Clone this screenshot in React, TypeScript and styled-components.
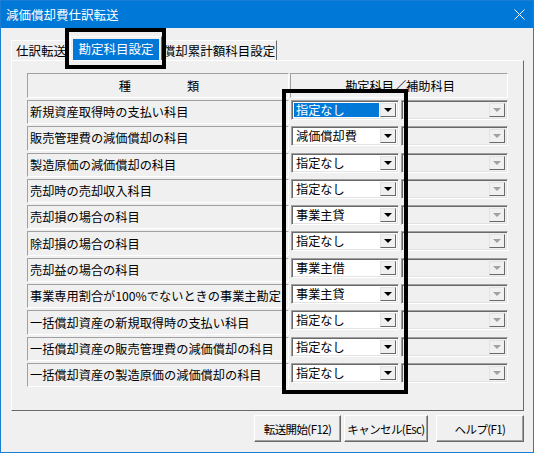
import {Fragment} from 'react';
import styled, {createGlobalStyle} from 'styled-components';

const GlobalStyle = createGlobalStyle`
    html, body {
        margin: 0;
        padding: 0;
        background: #ffffff;
    }
    body {
        font-family: "Noto Sans CJK JP", "Liberation Sans", sans-serif;
        font-size: 12px;
        color: #000000;
    }
`;

const rows = [
    {label: '新規資産取得時の支払い科目', value: '指定なし', active: true},
    {label: '販売管理費の減価償却の科目', value: '減価償却費'},
    {label: '製造原価の減価償却の科目', value: '指定なし'},
    {label: '売却時の売却収入科目', value: '指定なし'},
    {label: '売却損の場合の科目', value: '事業主貸'},
    {label: '除却損の場合の科目', value: '指定なし'},
    {label: '売却益の場合の科目', value: '事業主借'},
    {label: '事業専用割合が100%でないときの事業主勘定', value: '事業主貸'},
    {label: '一括償却資産の新規取得時の支払い科目', value: '指定なし'},
    {label: '一括償却資産の販売管理費の減価償却の科目', value: '指定なし'},
    {label: '一括償却資産の製造原価の減価償却の科目', value: '指定なし'},
];

const Window = styled.div`
    position: relative;
    width: 534px;
    height: 453px;
    box-sizing: border-box;
    border: 1px solid #1a7fd4;
    background: #f0f0f0;
    display: flex;
    flex-direction: column;
    overflow: hidden;
`;

const TitleBar = styled.div`
    height: 27px;
    background: #0078d7;
    color: #ffffff;
    display: flex;
    align-items: center;
    justify-content: space-between;
    padding: 0 8px 0 5px;
    font-size: 12.5px;
`;

const Body = styled.div`
    flex: 1;
    display: flex;
    flex-direction: column;
    padding: 8px 9px 0 10px;
`;

const TabRow = styled.div`
    height: 24px;
    display: flex;
    align-items: flex-end;
`;

const Tab = styled.div<{$selected?: boolean; $width: number}>`
    width: ${(p) => p.$width}px;
    height: ${(p) => (p.$selected ? 24 : 20)}px;
    box-sizing: border-box;
    display: flex;
    align-items: center;
    justify-content: center;
    padding: ${(p) => (p.$selected ? '1px 2px 0' : '0')};
    margin: ${(p) => (p.$selected ? '0 -1px' : '0')};
    border: 1px solid;
    border-bottom: none;
    border-color: #ffffff #696969 transparent #ffffff;
    position: relative;
    z-index: ${(p) => (p.$selected ? 1 : 0)};
    background: #f0f0f0;
    white-space: nowrap;
    font-size: 12.5px;
`;

const TabFocus = styled.span`
    flex: 1;
    text-align: center;
    background: #0078d7;
    color: #ffffff;
    padding: 1px 0 2px;
    line-height: 18px;
`;

const Panel = styled.div`
    height: 351px;
    box-sizing: border-box;
    border: 1px solid;
    border-color: #ffffff #696969 #696969 #ffffff;
    padding: 12px 0 0 15px;
`;

const Grid = styled.div`
    display: grid;
    grid-template-columns: 262px 218px;
    grid-auto-rows: 24.3px;
    grid-template-rows: 25px;
    column-gap: 1px;
    row-gap: 2px;
`;

const Cell = styled.div<{$center?: boolean}>`
    box-sizing: border-box;
    border: 1px solid;
    border-color: #a0a0a0 #ffffff #ffffff #a0a0a0;
    display: flex;
    align-items: center;
    justify-content: ${(p) => (p.$center ? 'center' : 'flex-start')};
    gap: 56px;
    padding-left: 2px;
    white-space: nowrap;
    font-size: 12.2px;
`;

const ComboPair = styled.div`
    display: flex;
    gap: 2px;
    height: 20px;
    padding-left: 1px;
`;

const Combo = styled.div<{$disabled?: boolean}>`
    width: ${(p) => (p.$disabled ? 107 : 108)}px;
    height: 20px;
    box-sizing: border-box;
    border: 1px solid;
    border-color: #a0a0a0 #ffffff #ffffff #a0a0a0;
    box-shadow: inset 1px 1px 0 #696969, inset -1px -1px 0 #e3e3e3;
    background: ${(p) => (p.$disabled ? '#f0f0f0' : '#ffffff')};
    display: flex;
    align-items: stretch;
    padding: 2px;
`;

const ComboText = styled.div<{$active?: boolean}>`
    flex: 1;
    display: flex;
    align-items: center;
    padding-left: 2px;
    margin-right: 1px;
    background: ${(p) => (p.$active ? '#0078d7' : 'transparent')};
    color: ${(p) => (p.$active ? '#ffffff' : '#000000')};
    font-size: 12.2px;
    line-height: 14px;
    white-space: nowrap;
`;

const ComboButton = styled.div<{$disabled?: boolean}>`
    width: 16px;
    box-sizing: border-box;
    background: #f0f0f0;
    border: 1px solid;
    border-color: #e3e3e3 #696969 #696969 #e3e3e3;
    display: flex;
    align-items: center;
    justify-content: center;
    &::after {
        content: '';
        border-left: 4px solid transparent;
        border-right: 4px solid transparent;
        border-top: 4px solid ${(p) => (p.$disabled ? '#a0a0a0' : '#000000')};
    }
`;

const ButtonRow = styled.div`
    display: flex;
    justify-content: flex-end;
    margin-top: 4px;
`;

const Button = styled.button<{$width: number; $gap: number}>`
    width: ${(p) => p.$width}px;
    height: 27px;
    margin-left: ${(p) => p.$gap}px;
    box-sizing: border-box;
    background: #f0f0f0;
    border: 1px solid;
    border-color: #ffffff #696969 #696969 #ffffff;
    box-shadow: inset -1px -1px 0 #a0a0a0;
    font-family: "Noto Sans CJK JP", "Liberation Sans", sans-serif;
    font-size: 11.5px;
    color: #000000;
    padding: 0;
    white-space: nowrap;
    letter-spacing: -0.6px;
`;

const Marker = styled.div<{$x: number; $y: number; $w: number; $h: number}>`
    position: absolute;
    left: ${(p) => p.$x}px;
    top: ${(p) => p.$y}px;
    width: ${(p) => p.$w}px;
    height: ${(p) => p.$h}px;
    box-sizing: border-box;
    border: 4px solid #000000;
    pointer-events: none;
`;

const CloseIcon = () => (
    <svg width="11" height="11" viewBox="0 0 11 11">
        <path d="M0.5 0.5 L10.5 10.5 M10.5 0.5 L0.5 10.5" stroke="#ffffff" strokeWidth="1" />
    </svg>
);

const App = () => {
    return (
        <>
            <GlobalStyle />
            <Window>
                <TitleBar>
                    <span>減価償却費仕訳転送</span>
                    <CloseIcon />
                </TitleBar>
                <Body>
                    <TabRow>
                        <Tab $width={60}>仕訳転送</Tab>
                        <Tab $selected $width={92}>
                            <TabFocus>勘定科目設定</TabFocus>
                        </Tab>
                        <Tab $width={116}>償却累計額科目設定</Tab>
                    </TabRow>
                    <Panel>
                        <Grid>
                            <Cell $center>
                                <span>種</span>
                                <span>類</span>
                            </Cell>
                            <Cell $center>勘定科目／補助科目</Cell>
                            {rows.map((row) => (
                                <Fragment key={row.label}>
                                    <Cell>{row.label}</Cell>
                                    <ComboPair>
                                        <Combo>
                                            <ComboText $active={row.active}>
                                                {row.value}
                                            </ComboText>
                                            <ComboButton />
                                        </Combo>
                                        <Combo $disabled>
                                            <ComboText />
                                            <ComboButton $disabled />
                                        </Combo>
                                    </ComboPair>
                                </Fragment>
                            ))}
                        </Grid>
                    </Panel>
                    <ButtonRow>
                        <Button $width={87} $gap={0}>
                            転送開始(F12)
                        </Button>
                        <Button $width={84} $gap={3}>
                            キャンセル(Esc)
                        </Button>
                        <Button $width={88} $gap={8}>
                            ヘルプ(F1)
                        </Button>
                    </ButtonRow>
                </Body>
                <Marker $x={64} $y={27} $w={101} $h={41} />
                <Marker $x={281} $y={88} $w={126} $h={305} />
            </Window>
        </>
    );
};

export default App;
